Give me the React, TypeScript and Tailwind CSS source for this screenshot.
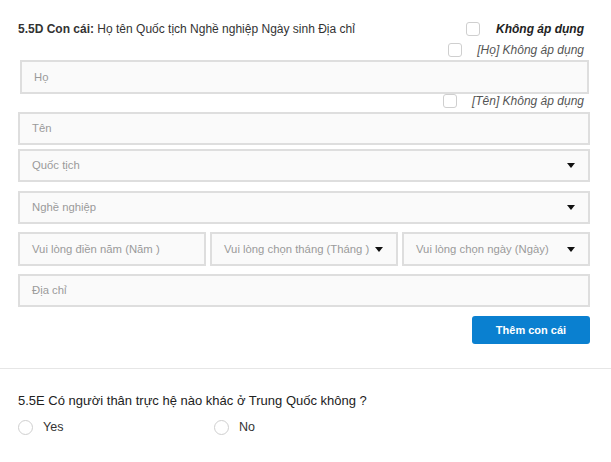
import React from "react";

function Caret() {
  return (
    <svg width="8" height="5" viewBox="0 0 8 5" className="shrink-0">
      <path d="M0 0 H8 L4 5 Z" fill="#111" />
    </svg>
  );
}

function Box() {
  return <span className="block w-[14px] h-[14px] rounded-[3px] border border-[#cfcfcf] bg-white shrink-0" />;
}

function Field({ label, select, className = "" }: { label: string; select?: boolean; className?: string }) {
  return (
    <div
      className={
        "flex items-center justify-between border-2 border-[#dedede] bg-[#fafafa] pl-[12px] pr-[13px] text-[11.3px] text-[#9a9a9a] " +
        className
      }
    >
      <span className="whitespace-nowrap">{label}</span>
      {select && <Caret />}
    </div>
  );
}

export default function App() {
  return (
    <div className="w-[611px] h-[462px] overflow-hidden bg-white text-[12px] text-[#333]" style={{ fontFamily: '"Liberation Sans", Arial, sans-serif' }}>
      <div className="pl-[18px] pr-[21px] pt-[22px] pb-[24px] border-b border-[#e6e6e6]">
        <div className="flex items-center justify-between h-[14px]">
          <div className="whitespace-nowrap leading-[14px]">
            <span className="font-bold">5.5D Con cái:</span> Họ tên Quốc tịch Nghề nghiệp Ngày sinh Địa chỉ
          </div>
          <div className="flex items-center gap-[16px] mr-[6px]">
            <Box />
            <span className="font-bold italic text-[#222]">Không áp dụng</span>
          </div>
        </div>
        <div className="flex items-center justify-end gap-[15px] h-[14px] mt-[7px] mr-[6px]">
          <Box />
          <span className="italic text-[#555]">[Họ] Không áp dụng</span>
        </div>
        <Field label="Họ" className="h-[34px] mt-[3px] ml-[2px] mr-[1px]" />
        <div className="flex items-center justify-end gap-[15px] h-[14px] mr-[6px]">
          <Box />
          <span className="italic text-[#555]">[Tên] Không áp dụng</span>
        </div>
        <Field label="Tên" className="h-[33px] mt-[4px]" />
        <Field label="Quốc tịch" select className="h-[33px] mt-[4px]" />
        <Field label="Nghề nghiệp" select className="h-[33px] mt-[9px]" />
        <div className="grid grid-cols-3 gap-[4px] mt-[8px]">
          <Field label="Vui lòng điền năm (Năm )" className="h-[34px]" />
          <Field label="Vui lòng chọn tháng (Tháng )" select className="h-[34px]" />
          <Field label="Vui lòng chọn ngày (Ngày)" select className="h-[34px]" />
        </div>
        <Field label="Địa chỉ" className="h-[33px] mt-[8px]" />
        <div className="flex justify-end mt-[9px]">
          <button className="w-[118px] h-[28px] rounded-[3px] bg-[#0a80d0] text-white font-bold text-[11px]">
            Thêm con cái
          </button>
        </div>
      </div>
      <div className="pl-[18px] pt-[25px] pb-[28px] border-b border-[#e6e6e6]">
        <div className="leading-[14px] text-[13px] text-[#222]">5.5E Có người thân trực hệ nào khác ở Trung Quốc không ?</div>
        <div className="flex items-center h-[14px] mt-[12px] text-[12.5px]">
          <div className="flex items-center gap-[10px] w-[196px]">
            <span className="block w-[15px] h-[15px] rounded-full border border-[#cfcfcf] bg-white" />
            <span className="text-[#333]">Yes</span>
          </div>
          <div className="flex items-center gap-[10px]">
            <span className="block w-[15px] h-[15px] rounded-full border border-[#cfcfcf] bg-white" />
            <span className="text-[#333]">No</span>
          </div>
        </div>
      </div>
    </div>
  );
}
